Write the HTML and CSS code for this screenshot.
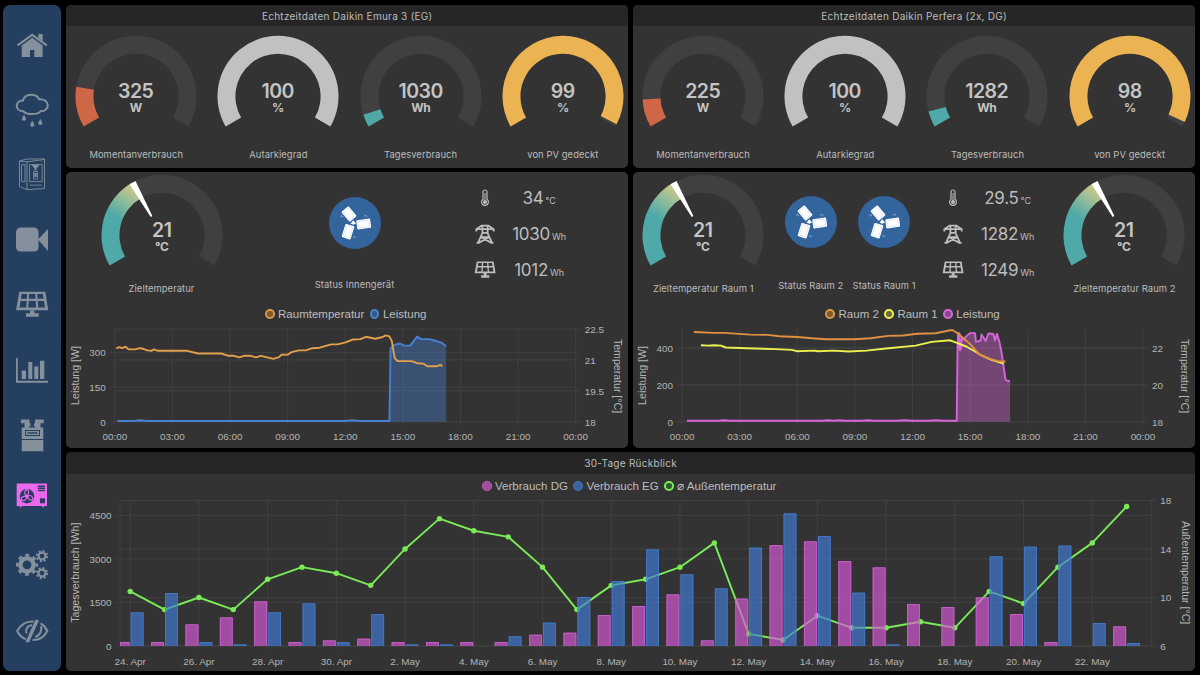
FILE: index.html
```html
<!DOCTYPE html>
<html lang="de">
<head>
    <meta charset="UTF-8">
    <meta name="viewport" content="width=device-width, initial-scale=1.0">
    <title>Klimaanlage</title>
    <link rel="stylesheet" href="styles.css">
</head>
<body>
    <svg class="symbols">
        <symbol id="solar" viewBox="0 0 34 34">
            <path fill="currentColor" fill-rule="evenodd" d="M4.3 3.8H30.3L33.3 22.2H1ZM6.7 6L6 10.8H11.8L12.2 6ZM14.2 6L13.9 10.8H20.5L20.2 6ZM22.2 6L22.6 10.8H28.6L27.8 6ZM5.6 13L4.5 19.4H11.2L11.7 13ZM13.7 13L13.3 19.4H21.1L20.7 13ZM22.8 13L23.2 19.4H30L28.9 13ZM15 22H19.4V25.2H23.7V28.8H11V25.2H15Z"/>
        </symbol>
        <symbol id="thermo" viewBox="0 0 10 18">
            <path d="M3 10.2V3a2 2 0 0 1 4 0v7.2a3.4 3.4 0 1 1-4 0Z" fill="none" stroke="currentColor" stroke-width="1.2"/>
            <circle cx="5" cy="13" r="2" fill="currentColor"/>
            <path d="M5 4v9" stroke="currentColor" stroke-width="1"/>
        </symbol>
        <symbol id="pylon" viewBox="0 0 20 20">
            <path d="M1.3 7.6V5.2L6.6 1.6H13.4L18.7 5.2V7.6M1.3 5.2H18.7M7.4 1.6V9L3 18.8M12.6 1.6V9L17 18.8M7.4 8.8H12.6M6 13.2H14M6 13.2L16 18.6M14 13.2L4 18.6M1.5 18.9H4.6M15.4 18.9H18.5" fill="none" stroke="currentColor" stroke-width="1.8"/>
        </symbol>
        <symbol id="fan" viewBox="-26 -26 52 52">
            <circle r="26" fill="#33649c"/>
            <g fill="#fff">
                <g transform="translate(-6 -9) rotate(50)"><rect x="-6.5" y="-4.7" width="13" height="9.4" rx="1.2"/><rect class="blade" x="-5" y="-3.3" width="10" height="6.6" rx="1"/></g>
                <g transform="translate(8.7 1) rotate(-8)"><rect x="-7" y="-4.7" width="14" height="9.4" rx="1.2"/><rect class="blade" x="-5.5" y="-3.3" width="11" height="6.6" rx="1"/></g>
                <g transform="translate(-7 8.7) rotate(107)"><rect x="-7" y="-4.7" width="14" height="9.4" rx="1.2"/><rect class="blade" x="-5.5" y="-3.3" width="11" height="6.6" rx="1"/></g>
                <path d="M-1.7 -2.8L1 .6L-1.7 1.8L-4.4 .6Z"/>
            </g>
            <path d="M-14.5 -6l1.3-2.2M-13 -5.5l1-1.6M9 -6.5l1.6-1.6 1.6 2M-2 14.3q1.4-1.4 3 .6" fill="none" stroke="#9fbbdc" stroke-width=".8"/>
        </symbol>
    </svg>

    <nav class="sidebar">
        <a><svg viewBox="0 0 34 34">
            <path d="M2.6 17.3L17.2 6.8L31.8 17.3" fill="none" stroke="currentColor" stroke-width="2.2"/>
            <path d="M23.3 5.9H27.7V13L23.3 10ZM6.7 17.5L17.2 9.8L27.7 17.5V28.9H19.3V21.9H15V28.9H6.7Z" fill="currentColor"/>
        </svg></a>
        <a><svg viewBox="0 0 34 34">
            <path d="M8.5 18.3C-.5 18.3-.3 7.2 8 7.6C10-.2 21.6.3 24 6.2C35.4 5.5 35.4 18.5 25.5 18.3C23 22 11.5 22 8.5 18.3Z" fill="none" stroke="currentColor" stroke-width="2"/>
            <path d="M9 21.7q4.2 5.8 0 6q-4.2-.2 0-6M17.3 27.7q4.2 5.8 0 6q-4.2-.2 0-6M25.3 26q4.2 5.8 0 6q-4.2-.2 0-6" fill="currentColor"/>
        </svg></a>
        <a><svg viewBox="0 0 34 34">
            <g fill="none" stroke="currentColor" stroke-width=".9">
                <path d="M4.5 3L12 1H29.5V30.5L12 31.7L4.5 28.6ZM4.5 3L12 3.8V31.7M12 3.8L29.5 1.5M6.5 7L10 6.2V24L6.5 23.2Z"/>
                <path d="M14.5 6.5H27.2V23.5H14.5ZM18.5 21V13.5H22.5V21Z" stroke-width=".8"/>
                <path d="M15 27.2H27" stroke-width="1.6" opacity=".5"/>
            </g>
            <path d="M16.5 7H24.5L21.5 10.5V12.5H19.5V10.5ZM19.3 15H21.7V19H19.3Z" fill="currentColor"/>
        </svg></a>
        <a><svg viewBox="0 0 34 34">
            <rect x="1" y="4.6" width="22.6" height="24" rx="4.6" fill="currentColor"/>
            <path d="M23 16.6L33 6V28Z" fill="currentColor"/>
        </svg></a>
        <a><svg><use href="#solar"/></svg></a>
        <a><svg viewBox="0 0 34 34">
            <path d="M1 4.1H2.8V26.8H33V28.7H1ZM6.7 16.4H11V25H6.7ZM13.3 8H17.3V25H13.3ZM19.3 12.4H23.3V25H19.3ZM25 6.7H29.3V25H25Z" fill="currentColor"/>
        </svg></a>
        <a><svg viewBox="0 0 34 34">
            <path d="M6 .6H14.5V4.3H15.5V7L13 8.6H21L19 7V4.3H20V.6H28.7V4.3H25.5V8.6H28.3V20H6.7V8.6H9.5V4.3H6ZM6.7 21H28.3V32.3H6.7Z" fill="currentColor"/>
            <rect x="10.5" y="11.5" width="14" height="5" fill="none" stroke="#243f5f"/>
            <path d="M12.5 14h10" stroke="#243f5f" stroke-width="1.4"/>
        </svg></a>
        <a class="active"><svg viewBox="0 0 34 34">
            <path d="M1.7 -.5H32V22H29V23.3H27.3V22H6.5V23.3H4.8V22H1.7Z" fill="currentColor"/>
            <circle cx="12" cy="12.2" r="7.2" fill="#243f5f"/>
            <g fill="none" stroke="currentColor" stroke-width="1.1">
                <path id="wing" d="M12 12.2C8.5 9.8 9.3 6.3 12 5.6C14.4 6.6 14 9.4 12 12.2"/>
                <use href="#wing" transform="rotate(120 12 12.2)"/>
                <use href="#wing" transform="rotate(240 12 12.2)"/>
            </g>
            <circle cx="12" cy="12.2" r="1.6" fill="currentColor"/>
            <path d="M22.8 2.2H30M22.8 4.3H30M22.8 6.4H30" stroke="#243f5f" stroke-width="1.5"/>
            <rect x="25" y="14.3" width="5" height="5" fill="#243f5f"/>
        </svg></a>
        <a><svg viewBox="0 0 34 34">
            <g fill="none" stroke="currentColor">
                <circle cx="12" cy="15.8" r="6.6" stroke-width="4.4"/>
                <circle cx="12" cy="15.8" r="9.6" stroke-width="2.8" stroke-dasharray="3.77 3.77" stroke-dashoffset="1.9"/>
                <circle cx="27" cy="7.1" r="3.5" stroke-width="2.2"/>
                <circle cx="27" cy="7.1" r="5.2" stroke-width="1.8" stroke-dasharray="2.04 2.04"/>
                <circle cx="27" cy="24.1" r="3.5" stroke-width="2.2"/>
                <circle cx="27" cy="24.1" r="5.2" stroke-width="1.8" stroke-dasharray="2.04 2.04"/>
            </g>
        </svg></a>
        <a><svg viewBox="0 0 34 34">
            <g fill="none" stroke="currentColor" stroke-width="2.1">
                <path d="M18.5 7.6C11 6.5 5 11.5 2.2 17C4 21 7 23.8 10.8 25.3"/>
                <path d="M25.6 9.4C28.5 11 31 13.8 32.3 17C29.5 22.5 24.5 26.2 17.5 26"/>
                <path d="M17 11.2C12.5 11.2 10.2 15 11.5 19.5M26 12.2C27.5 16.5 25 21 20.5 23.2"/>
            </g>
            <path d="M20.5 5.6L24 6.2L14 28.6L10.5 28Z" fill="currentColor"/>
        </svg></a>
    </nav>

    <main class="dashboard">
        <section class="card">
            <h2>Echtzeitdaten Daikin Emura 3 (EG)</h2>
            <div class="gauges">
                <div class="gauge" data-value="325" data-max="2000" data-unit="W" data-color="#cf6746">Momentanverbrauch</div>
                <div class="gauge" data-value="100" data-max="100" data-unit="%" data-color="#c1c1c1">Autarkiegrad</div>
                <div class="gauge" data-value="1030" data-max="20000" data-unit="Wh" data-color="#4fa9a8">Tagesverbrauch</div>
                <div class="gauge" data-value="99" data-max="100" data-unit="%" data-color="#ebb352">von PV gedeckt</div>
            </div>
        </section>

        <section class="card">
            <h2>Echtzeitdaten Daikin Perfera (2x, DG)</h2>
            <div class="gauges">
                <div class="gauge" data-value="225" data-max="2000" data-unit="W" data-color="#cf6746">Momentanverbrauch</div>
                <div class="gauge" data-value="100" data-max="100" data-unit="%" data-color="#c1c1c1">Autarkiegrad</div>
                <div class="gauge" data-value="1282" data-max="20000" data-unit="Wh" data-color="#4fa9a8">Tagesverbrauch</div>
                <div class="gauge" data-value="98" data-max="100" data-unit="%" data-color="#ebb352">von PV gedeckt</div>
            </div>
        </section>

        <section class="card room">
            <div class="status status-eg">
                <div class="gauge" data-value="21" data-max="55.5" data-unit="°C" data-color="url(#heat)" data-needle="1">Zieltemperatur</div>
                <div class="fan"><svg><use href="#fan"/></svg>Status Innengerät</div>
                <div class="stats">
                    <svg class="thermo"><use href="#thermo"/></svg><p>34 <small>°C</small></p>
                    <svg class="pylon"><use href="#pylon"/></svg><p>1030 <small>Wh</small></p>
                    <svg class="solar"><use href="#solar"/></svg><p>1012 <small>Wh</small></p>
                </div>
            </div>
            <div class="legend">
                <span class="orange">Raumtemperatur</span>
                <span class="blue">Leistung</span>
            </div>
            <svg class="chart" id="chartEG" viewBox="66 323 562.4 124.3"></svg>
        </section>

        <section class="card room">
            <div class="status status-dg">
                <div class="gauge" data-value="21" data-max="55.5" data-unit="°C" data-color="url(#heat)" data-needle="1">Zieltemperatur Raum 1</div>
                <div class="fan"><svg><use href="#fan"/></svg>Status Raum 2</div>
                <div class="fan"><svg><use href="#fan"/></svg>Status Raum 1</div>
                <div class="stats">
                    <svg class="thermo"><use href="#thermo"/></svg><p>29.5 <small>°C</small></p>
                    <svg class="pylon"><use href="#pylon"/></svg><p>1282 <small>Wh</small></p>
                    <svg class="solar"><use href="#solar"/></svg><p>1249 <small>Wh</small></p>
                </div>
                <div class="gauge" data-value="21" data-max="55.5" data-unit="°C" data-color="url(#heat)" data-needle="1">Zieltemperatur Raum 2</div>
            </div>
            <div class="legend">
                <span class="orange">Raum 2</span>
                <span class="yellow">Raum 1</span>
                <span class="pink">Leistung</span>
            </div>
            <svg class="chart" id="chartDG" viewBox="632.9 323 562.4 124.3"></svg>
        </section>

        <section class="card month">
            <h2>30-Tage Rückblick</h2>
            <div class="legend">
                <span class="pink-bar">Verbrauch DG</span>
                <span class="blue-bar">Verbrauch EG</span>
                <span class="green">⌀ Außentemperatur</span>
            </div>
            <svg class="chart" id="chartMonth" viewBox="66 495 1129.3 175.5"></svg>
        </section>
    </main>

    <script src="script.js"></script>
</body>
</html>
```
FILE: styles.css
```css
body {
    margin: 0;
    width: 1200px;
    height: 675px;
    box-sizing: border-box;
    padding: 4.5px 4.7px 4.5px 2.5px;
    display: flex;
    gap: 5px;
    overflow: hidden;
    background-color: #000;
    color: #bdbdbd;
    font-family: Inter, "Liberation Sans", sans-serif;
}

.symbols {
    position: absolute;
    width: 0;
    height: 0;
}

/* sidebar */
.sidebar {
    width: 58.5px;
    flex: none;
    box-sizing: border-box;
    padding-top: 8px;
    background-color: #243f5f;
    border-radius: 7px;
    color: #85909d;
}

.sidebar a {
    display: flex;
    align-items: center;
    justify-content: center;
    height: 65.1px;
}

.sidebar svg {
    width: 34px;
    height: 34px;
    overflow: visible;
}

.sidebar .active {
    color: #ee68ee;
}

/* cards */
.dashboard {
    flex: 1;
    display: grid;
    grid-template-columns: 1fr 1fr;
    grid-template-rows: 163px 275.5px 218.5px;
    gap: 4.5px;
}

.card {
    min-width: 0;
    background-color: #333;
    border-radius: 5px;
    overflow: hidden;
}

.month {
    grid-column: span 2;
}

h2 {
    margin: 0;
    height: 21.5px;
    line-height: 22.5px;
    background-color: #262626;
    font-size: 10px;
    font-weight: 400;
    letter-spacing: 0.27px;
    text-align: center;
}

/* gauges */
.gauges {
    display: grid;
    grid-template-columns: repeat(4, 142.2px);
    margin-left: -0.9px;
    padding-top: 9.4px;
}

.gauge,
.fan {
    display: flex;
    flex-direction: column;
    align-items: center;
    font-size: 9.4px;
    line-height: 14px;
    letter-spacing: 0.08px;
    white-space: nowrap;
}

.gauge svg {
    width: 124px;
    height: 94px;
    margin-bottom: 19px;
}

.gauge .track {
    fill: #404040;
}

.gauge .value {
    font-size: 19.5px;
    font-weight: 600;
    letter-spacing: -0.5px;
    text-anchor: middle;
    fill: #c4c4c4;
}

.gauge .unit {
    font-size: 12px;
    font-weight: 700;
    letter-spacing: -0.4px;
    text-anchor: middle;
    fill: #c4c4c4;
}

/* room cards */
.status {
    display: grid;
    height: 133px;
}

.status-eg {
    grid-template-columns: 191px 195px 146px;
}

.status-dg {
    grid-template-columns: 140.8px 74px 72.8px 133.2px 141.4px;
}

.status .gauge {
    padding-top: 2.3px;
}

.status .gauge svg {
    margin-bottom: 13.5px;
}

.fan {
    padding-top: 25px;
}

.status-dg .fan {
    padding-top: 23.7px;
}

.fan svg {
    width: 52px;
    height: 52px;
    margin-bottom: 29px;
}

.status-dg .fan svg {
    margin-bottom: 31px;
}

.blade {
    fill: none;
    stroke: #8fb0d8;
    stroke-width: 0.5;
    stroke-dasharray: 1 0.8;
}

.stats {
    display: grid;
    grid-template-columns: 29px 80px;
    grid-template-rows: repeat(3, 36px);
    align-items: center;
    justify-items: center;
    padding: 8px 0 0 18.2px;
}

.stats p {
    margin: 0;
    font-size: 17px;
    font-weight: 400;
    letter-spacing: -0.3px;
    word-spacing: -2.5px;
    white-space: nowrap;
}

.stats small {
    font-size: 9px;
    letter-spacing: 0;
}

.thermo {
    width: 10px;
    height: 18px;
}

.pylon {
    width: 20px;
    height: 20px;
}

.solar {
    width: 22px;
    height: 22px;
}

/* legends */
.legend {
    display: flex;
    justify-content: center;
    gap: 5.5px;
    height: 18px;
    padding-right: 3px;
    line-height: 18px;
    font-family: "Liberation Sans", Arial, sans-serif;
    font-size: 11.5px;
}

.month .legend {
    padding-top: 3.5px;
}

.legend span {
    display: flex;
    align-items: center;
}

.legend span::before {
    content: "";
    flex: none;
    box-sizing: border-box;
    width: 9.6px;
    height: 9.6px;
    margin-right: 3.5px;
    border: 2px solid;
    border-radius: 50%;
}

.legend .orange::before {
    border-color: #e0963f;
    background-color: #7b5a37;
}

.legend .blue::before {
    border-color: #4580d2;
    background-color: #3b5683;
}

.legend .yellow::before {
    border-color: #eef04f;
    background-color: #6a6b3a;
}

.legend .pink::before {
    border-color: #d767d8;
    background-color: #85488a;
}

.legend .pink-bar::before {
    border: 1px solid #c55fc5;
    background-color: #a04ea0;
}

.legend .blue-bar::before {
    border: 1px solid #4478bd;
    background-color: #3c649f;
}

.legend .green::before {
    border-color: #7aeb57;
    background-color: #2f5a28;
}

/* charts */
.chart {
    display: block;
    width: 100%;
    height: 124.3px;
}

.month .chart {
    height: 175.5px;
}

.chart text {
    font-family: "Liberation Sans", Arial, sans-serif;
    font-size: 9.9px;
    fill: #b4b4b4;
}

.chart .title {
    font-size: 10.6px;
    text-anchor: middle;
}

.chart .grid {
    stroke: #404040;
    stroke-width: 1;
}

.chart polyline {
    fill: none;
    stroke-width: 1.9;
    stroke-linejoin: round;
}
```
FILE: script.js
```js
var NS = 'http://www.w3.org/2000/svg';

function add(parent, name, attrs, text) {
    var el = document.createElementNS(NS, name);
    for (var key in attrs) {
        el.setAttribute(key, attrs[key]);
    }
    if (text !== undefined) {
        el.textContent = text;
    }
    parent.appendChild(el);
    return el;
}

// ---------- gauges (240 degree arc, centre 62/61) ----------
function polar(r, deg) {
    var a = deg * Math.PI / 180;
    return (62 + r * Math.cos(a)).toFixed(2) + ' ' + (61.3 + r * Math.sin(a)).toFixed(2);
}

function arc(fraction) {
    var end = 150 + 240 * fraction;
    var large = fraction > 0.75 ? 1 : 0;
    return 'M' + polar(60.5, 150) + 'A60.5 60.5 0 ' + large + ' 1 ' + polar(60.5, end) +
        'L' + polar(42.6, end) + 'A42.6 42.6 0 ' + large + ' 0 ' + polar(42.6, 150) + 'Z';
}

document.querySelectorAll('.gauge').forEach(function (gauge) {
    var d = gauge.dataset;
    var fraction = d.value / d.max;
    var svg = document.createElementNS(NS, 'svg');
    svg.setAttribute('viewBox', '0 0 124 94');
    gauge.insertBefore(svg, gauge.firstChild);

    if (d.needle) {
        var gradient = add(svg, 'linearGradient', { id: 'heat', gradientUnits: 'userSpaceOnUse', x1: 12, y1: 40, x2: 34, y2: 9 });
        add(gradient, 'stop', { offset: 0, 'stop-color': '#4fa9a8' });
        add(gradient, 'stop', { offset: 0.45, 'stop-color': '#8bbb9b' });
        add(gradient, 'stop', { offset: 1, 'stop-color': '#dfca87' });
    }
    add(svg, 'path', { 'class': 'track', d: arc(1) });
    add(svg, 'path', { d: arc(fraction), fill: d.color });
    if (d.needle) {
        var deg = 150 + 240 * fraction;
        add(svg, 'path', {
            d: 'M' + polar(60.5, deg - 3.2) + 'L' + polar(60.5, deg + 3.2) + 'L' + polar(21.5, deg + 2.5) + 'L' + polar(21.5, deg - 2.5) + 'Z',
            fill: '#fff'
        });
    }
    add(svg, 'text', { 'class': 'value', x: 61.7, y: 62.6 }, d.value);
    add(svg, 'text', { 'class': 'unit', x: 61.8, y: 76.6 }, d.unit);
});

// ---------- chart helpers ----------
function line(svg, x1, y1, x2, y2) {
    add(svg, 'line', { 'class': 'grid', x1: x1, y1: y1, x2: x2, y2: y2 });
}

function title(svg, x, y, angle, text) {
    add(svg, 'text', { 'class': 'title', transform: 'translate(' + x + ' ' + y + ') rotate(' + angle + ')', y: 3.6 }, text);
}

function dayChart(id, x0, opt) {
    var svg = document.getElementById(id);
    var base = 421.7, width = 460.9;
    var px = function (h) { return x0 + h * width / 24; };
    var power = function (v) { return base - v * opt.perWatt; };
    var temp = function (v) { return base - (v - 18) * opt.perDegree; };
    var points = function (data, scale) {
        return data.map(function (p) { return px(p[0]).toFixed(1) + ',' + scale(p[1]).toFixed(1); }).join(' ');
    };

    for (var h = 0; h <= 24; h += 3) {
        line(svg, px(h), 328.7, px(h), base + 4);
        add(svg, 'text', { x: px(h), y: 440.3, 'text-anchor': 'middle' }, ('0' + h % 24).slice(-2) + ':00');
    }
    opt.powerTicks.forEach(function (v) {
        line(svg, x0 - 5, power(v), x0 + width, power(v));
        add(svg, 'text', { x: x0 - 9, y: power(v) + 3.9, 'text-anchor': 'end' }, v);
    });
    opt.tempTicks.forEach(function (v) {
        line(svg, x0, temp(v), x0 + width + 5, temp(v));
        add(svg, 'text', { x: x0 + width + 9, y: temp(v) + 3.9 }, v);
    });
    title(svg, opt.titles[0], 375.5, -90, 'Leistung [W]');
    title(svg, opt.titles[1], 376, 90, 'Temperatur [°C]');

    var area = points(opt.power, power);
    var first = px(opt.power[0][0]), last = px(opt.power[opt.power.length - 1][0]);
    add(svg, 'polygon', { points: first + ',' + base + ' ' + area + ' ' + last + ',' + base, fill: opt.color, 'fill-opacity': opt.alpha });
    add(svg, 'polyline', { points: area, stroke: opt.color });
    opt.temps.forEach(function (t) {
        add(svg, 'polyline', { points: points(t.data, temp), stroke: t.color });
    });
}

dayChart('chartEG', 114.8, {
    perWatt: 0.2307,
    perDegree: 20.6,
    powerTicks: [0, 150, 300],
    tempTicks: [18, 19.5, 21, 22.5],
    titles: [75, 617.5],
    color: '#4580d2',
    alpha: 0.4,
    power: [
        [0.13, 3], [1, 3], [1.35, 6], [1.68, 3], [12, 3], [12.37, 6], [12.7, 3], [14.3, 3], [14.36, 319],
        [14.55, 333], [14.84, 339], [15.07, 330], [15.38, 330], [15.74, 369], [15.95, 358], [16.38, 358],
        [16.65, 352], [17, 343], [17.25, 327]
    ],
    temps: [{
        color: '#e3a04c',
        data: [
            [0.08, 21.56], [0.23, 21.62], [0.39, 21.57], [0.56, 21.64], [0.73, 21.51], [1.06, 21.51], [1.29, 21.57],
            [1.48, 21.54], [1.7, 21.46], [1.91, 21.44], [2.04, 21.51], [2.24, 21.44], [3.78, 21.44], [4.32, 21.31],
            [5.55, 21.31], [5.92, 21.2], [6.2, 21.2], [6.49, 21.12], [6.72, 21.2], [7.07, 21.2], [7.36, 21.12],
            [7.61, 21.2], [7.94, 21.12], [8.25, 21.05], [8.55, 21.13], [8.67, 21.25], [9.02, 21.26], [9.21, 21.38],
            [9.58, 21.46], [9.94, 21.46], [10.29, 21.57], [10.67, 21.59], [11.27, 21.75], [11.6, 21.75],
            [12.02, 21.85], [12.41, 21.99], [12.79, 22.01], [13.08, 22.12], [13.56, 22.03], [13.95, 22.11],
            [14.1, 22.19], [14.3, 22.14], [14.43, 21.9], [14.57, 21.1], [14.72, 20.94], [15.45, 20.94],
            [15.74, 20.84], [16.07, 20.82], [16.26, 20.69], [16.76, 20.69], [16.94, 20.76], [17.07, 20.69]
        ]
    }]
});

dayChart('chartDG', 682, {
    perWatt: 0.1842,
    perDegree: 18.42,
    powerTicks: [0, 200, 400],
    tempTicks: [18, 20, 22],
    titles: [642.7, 1185],
    color: '#d565d8',
    alpha: 0.4,
    power: [
        [0.25, 5], [1.9, 5], [2.2, 8], [2.5, 5], [7.3, 5], [7.6, 8], [7.9, 5], [8.2, 8], [8.5, 5], [9.3, 5],
        [9.65, 8], [10, 5], [11.2, 5], [11.6, 8], [12, 5], [12.8, 5], [13.2, 8], [13.6, 5], [14.3, 5],
        [14.34, 387], [14.37, 481], [14.4, 400], [14.44, 481], [14.47, 387], [14.53, 402], [14.56, 455], [14.62, 445],
        [14.8, 463], [15, 481], [15.25, 481], [15.3, 434], [15.55, 441], [15.59, 474], [15.81, 438], [15.95, 479],
        [16.21, 476], [16.29, 441], [16.4, 476], [16.53, 432], [16.63, 378], [16.72, 315], [16.84, 229],
        [16.93, 222], [17.08, 220]
    ],
    temps: [{
        color: '#eef04f',
        data: [
            [0.98, 22.15], [1.36, 22.13], [1.65, 22.15], [2.03, 22.13], [2.27, 22.03], [3.35, 21.99], [4.87, 21.94],
            [5.72, 21.9], [5.97, 21.83], [6.9, 21.86], [7.05, 21.83], [7.9, 21.86], [8.66, 21.81], [9.6, 21.86],
            [10.74, 21.99], [12.16, 22.13], [13, 22.33], [13.96, 22.42], [14.34, 22.26], [14.8, 22.08],
            [15.19, 21.85], [15.57, 21.61], [16.04, 21.39], [16.74, 21.16]
        ]
    }, {
        color: '#df9140',
        data: [
            [0.61, 22.87], [1.65, 22.82], [2.2, 22.82], [3.54, 22.73], [4.45, 22.71], [5.06, 22.64], [6, 22.6],
            [6.76, 22.53], [7.52, 22.48], [8.98, 22.48], [9.8, 22.53], [10.74, 22.66], [11.5, 22.68], [12.25, 22.77],
            [13.2, 22.8], [13.96, 22.96], [14.1, 22.96], [14.38, 22.77], [15, 22.21], [15.47, 21.66], [16.04, 21.41],
            [16.46, 21.29], [16.84, 21.27]
        ]
    }]
});

// ---------- last 30 days ----------
var dg = [138, 138, 746, 987, 1538, 138, 195, 253, 138, 138, 138, 138, 390, 459, 1068, 1378, 1779, 195, 1630, 3478,
    3605, 2927, 2709, 1446, 1343, 1676, 1102, 138, 0, 677];
var eg = [1159, 1825, 138, 60, 1159, 1469, 138, 1102, 55, 55, 0, 333, 804, 1688, 2239, 3329, 2468, 1986, 3387, 4569,
    3788, 1837, 55, 0, 0, 3088, 3421, 3456, 792, 103];
var outside = [10.5, 9, 10, 9, 11.5, 12.5, 12, 11, 14, 16.5, 15.5, 15, 12.5, 9, 11, 11.5, 12.5, 14.5, 7, 6.5,
    8.5, 7.5, 7.5, 8, 7.5, 10.5, 9.5, 12.5, 14.5, 17.5];

var month = document.getElementById('chartMonth');
var left = 120, right = 1151.6, bottom = 646;
var dayX = function (i) { return 130.2 + i * 34.36; };
var energyY = function (v) { return bottom - v * 0.02904; };
var outsideY = function (v) { return bottom - (v - 6) * 12.13; };

line(month, left, 500.4, left, bottom);
line(month, right, 500.4, right, bottom);
for (var i = 0; i < 30; i += 2) {
    line(month, dayX(i), 500.4, dayX(i), bottom + 4);
    add(month, 'text', { x: dayX(i), y: 664.8, 'text-anchor': 'middle' }, i < 7 ? (24 + i) + '. Apr' : (i - 6) + '. May');
}
[0, 1500, 3000, 4500].forEach(function (v) {
    line(month, left - 5, energyY(v), right, energyY(v));
    add(month, 'text', { x: 111.5, y: energyY(v) + 3.9, 'text-anchor': 'end' }, v);
});
[6, 10, 14, 18].forEach(function (v) {
    line(month, left, outsideY(v), right + 5, outsideY(v));
    add(month, 'text', { x: 1160.3, y: outsideY(v) + 3.9 }, v);
});
title(month, 75.3, 572.7, -90, 'Tagesverbrauch [Wh]');
title(month, 1185.3, 572.7, 90, 'Außentemperatur [°C]');

add(month, 'polyline', {
    points: outside.map(function (v, i) { return dayX(i) + ',' + outsideY(v); }).join(' '),
    stroke: '#7aeb57'
});
outside.forEach(function (v, i) {
    add(month, 'circle', { cx: dayX(i), cy: outsideY(v), r: 2.7, fill: '#7aeb57' });
});

function bar(x1, x2, v, fill, stroke) {
    if (!v) {
        return;
    }
    x1 = Math.max(x1, left);
    var y = energyY(v);
    add(month, 'rect', { x: x1, y: y, width: x2 - x1, height: bottom - y, fill: fill, 'fill-opacity': 0.68 });
    add(month, 'path', {
        d: 'M' + (x1 + 0.5) + ' ' + bottom + 'V' + (y + 0.5) + 'H' + (x2 - 0.5) + 'V' + bottom,
        fill: 'none', stroke: stroke, 'stroke-opacity': 0.7
    });
}
// bars lie over the temperature line
dg.forEach(function (v, i) {
    bar(dayX(i) - 13.5, dayX(i) - 0.5, v, '#d45ad6', '#d565d8');
});
eg.forEach(function (v, i) {
    bar(dayX(i) + 0.5, dayX(i) + 13.4, v, '#417bd3', '#4580d2');
});
```
